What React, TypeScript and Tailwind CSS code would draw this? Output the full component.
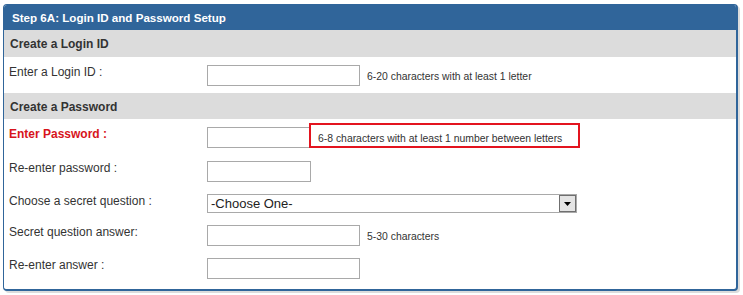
import React from "react";

function TextBox({ w }: { w: string }) {
  return <div className={`${w} h-[21px] border border-[#a9a9a9] bg-white shrink-0`} />;
}

function Label({ children, red }: { children: React.ReactNode; red?: boolean }) {
  return (
    <div
      className={
        red
          ? "w-[203px] shrink-0 pl-[5px] text-[12px] leading-[14px] font-bold text-[#d7141c]"
          : "w-[203px] shrink-0 pl-[5px] text-[12px] leading-[14px] text-[#333333]"
      }
    >
      {children}
    </div>
  );
}

function Hint({ children }: { children: React.ReactNode }) {
  return <span className="ml-[7px] text-[10.4px] leading-[12px] text-[#333333] pt-[2px]">{children}</span>;
}

function Section({ children, h }: { children: React.ReactNode; h: string }) {
  return (
    <div className={`${h} bg-[#dcdcdc] pl-[6px] flex items-center pt-[1px] text-[12px] font-bold text-[#333333]`}>
      {children}
    </div>
  );
}

export default function App() {
  return (
    <div className="w-[743px] h-[295px] bg-white pt-[4px] pl-[3px] font-['Liberation_Sans',Arial,sans-serif]">
      <div className="w-[735px] border-t border-l border-r-2 border-b-2 border-[#30659a] rounded-[4px] shadow-[2px_2px_0_#dcdcdc] overflow-hidden bg-white">
        <div className="h-[25px] bg-[#30659a] flex items-center pl-[8px] text-white font-bold text-[11.6px]">
          Step 6A: Login ID and Password Setup
        </div>
        <Section h="h-[27px]">Create a Login ID</Section>
        <div className="h-[36px] pt-[8px] flex items-start">
          <Label>Enter a Login ID :</Label>
          <div className="flex items-center">
            <TextBox w="w-[153px]" />
            <Hint>6-20 characters with at least 1 letter</Hint>
          </div>
        </div>
        <Section h="h-[26px]">Create a Password</Section>
        <div className="pt-[8px] pb-[10px] flex flex-col">
          <div className="flex items-start">
            <Label red>Enter Password :</Label>
            <div className="relative flex items-center">
              <TextBox w="w-[104px]" />
              <Hint>6-8 characters with at least 1 number between letters</Hint>
              <div className="absolute left-[102px] top-[-4px] w-[271px] h-[25px] border-2 border-[#e3141f]" />
            </div>
          </div>
          <div className="flex items-start mt-[13px]">
            <Label>Re-enter password :</Label>
            <TextBox w="w-[104px]" />
          </div>
          <div className="flex items-start mt-[12px]">
            <Label>Choose a secret question :</Label>
            <div className="w-[370px] h-[19px] border border-[#a9a9a9] bg-white flex items-center justify-between">
              <span className="pl-[3px] text-[13px] leading-[15px] text-[#222222]">-Choose One-</span>
              <div className="w-[17px] h-[17px] bg-[#e4e4e4] border border-[#6f6f6f] flex items-center justify-center">
                <svg width="7" height="4" viewBox="0 0 7 4">
                  <polygon points="0,0 7,0 3.5,4" fill="#000" />
                </svg>
              </div>
            </div>
          </div>
          <div className="flex items-start mt-[12px]">
            <Label>Secret question answer:</Label>
            <div className="flex items-center">
              <TextBox w="w-[153px]" />
              <Hint>5-30 characters</Hint>
            </div>
          </div>
          <div className="flex items-start mt-[12px]">
            <Label>Re-enter answer :</Label>
            <TextBox w="w-[153px]" />
          </div>
        </div>
      </div>
    </div>
  );
}
